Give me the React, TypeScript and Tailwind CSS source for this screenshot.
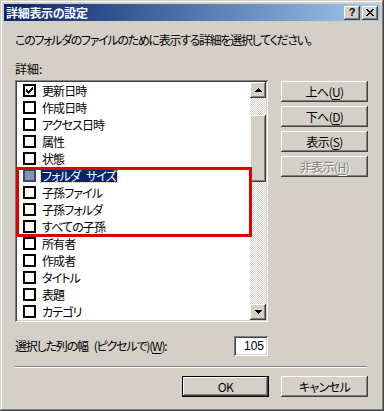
import React from "react";

const font =
  "font-['Noto_Sans_CJK_JP','Noto_Sans_CJK_SC',sans-serif] [font-feature-settings:'palt']";
const raised =
  "shadow-[inset_-1px_-1px_#404040,inset_1px_1px_#ffffff,inset_-2px_-2px_#808080,inset_2px_2px_#d4d0c8]";
const sunken =
  "shadow-[inset_1px_1px_#808080,inset_-1px_-1px_#ffffff,inset_2px_2px_#404040,inset_-2px_-2px_#d4d0c8]";

const items = [
  "更新日時",
  "作成日時",
  "アクセス日時",
  "属性",
  "状態",
  "フォルダ サイズ",
  "子孫ファイル",
  "子孫フォルダ",
  "すべての子孫",
  "所有者",
  "作成者",
  "タイトル",
  "表題",
  "カテゴリ",
];

function Check({ checked, selected }: { checked?: boolean; selected?: boolean }) {
  return (
    <div
      className={
        "w-[13px] h-[13px] shrink-0 border-2 " +
        (selected ? "border-[#3a4470] bg-[#8a92b4]" : "border-black bg-white")
      }
    >
      {checked && (
        <svg width="9" height="9" viewBox="0 0 9 9" shapeRendering="crispEdges">
          <rect x="7" y="1" width="1" height="1" fill="#000" />
          <rect x="6" y="2" width="2" height="1" fill="#000" />
          <rect x="1" y="3" width="1" height="1" fill="#000" />
          <rect x="5" y="3" width="3" height="1" fill="#000" />
          <rect x="1" y="4" width="2" height="1" fill="#000" />
          <rect x="4" y="4" width="3" height="1" fill="#000" />
          <rect x="1" y="5" width="5" height="1" fill="#000" />
          <rect x="2" y="6" width="3" height="1" fill="#000" />
          <rect x="3" y="7" width="1" height="1" fill="#000" />
        </svg>
      )}
    </div>
  );
}

function Btn({
  label,
  mn,
  disabled,
  def,
}: {
  label: string;
  mn?: string;
  disabled?: boolean;
  def?: boolean;
}) {
  const inner = (
    <div
      className={
        "flex items-center justify-center text-[12px] leading-none h-full w-full tracking-[-0.6px] " +
        raised +
        (disabled ? " text-[#808080] [text-shadow:1px_1px_#ffffff]" : " text-black")
      }
    >
      <span>
        {label}
        {mn && (
          <>
            (<span className="underline underline-offset-2">{mn}</span>)
          </>
        )}
      </span>
    </div>
  );
  if (def)
    return <div className="w-[87px] h-[21px] border border-black">{inner}</div>;
  return <div className="w-[87px] h-[21px]">{inner}</div>;
}

function ArrowBtn({ up }: { up?: boolean }) {
  return (
    <div className={"w-[16px] h-[16px] bg-[#d4d0c8] flex items-center justify-center " + raised}>
      <svg width="7" height="4" viewBox="0 0 7 4" shapeRendering="crispEdges">
        {up ? (
          <>
            <rect x="3" y="0" width="1" height="1" fill="#000" />
            <rect x="2" y="1" width="3" height="1" fill="#000" />
            <rect x="1" y="2" width="5" height="1" fill="#000" />
            <rect x="0" y="3" width="7" height="1" fill="#000" />
          </>
        ) : (
          <>
            <rect x="0" y="0" width="7" height="1" fill="#000" />
            <rect x="1" y="1" width="5" height="1" fill="#000" />
            <rect x="2" y="2" width="3" height="1" fill="#000" />
            <rect x="3" y="3" width="1" height="1" fill="#000" />
          </>
        )}
      </svg>
    </div>
  );
}

const checker =
  "bg-[repeating-conic-gradient(#d4d0c8_0_25%,#ffffff_0_50%)] bg-size-[2px_2px]";

function Label({ text }: { text: string }) {
  const parts = text.split(" ");
  return (
    <>
      {parts.map((p, i) => (
        <React.Fragment key={i}>
          {i > 0 && <span className="inline-block w-[6px]" />}
          {p}
        </React.Fragment>
      ))}
    </>
  );
}

export default function App() {
  return (
    <div
      className={
        "w-[384px] h-[411px] bg-[#d4d0c8] p-[4px] text-black text-[12px] " +
        font +
        " shadow-[inset_-1px_-1px_#404040,inset_1px_1px_#d4d0c8,inset_-2px_-2px_#808080,inset_2px_2px_#ffffff]"
      }
    >
      {/* Title bar */}
      <div className="h-[17px] flex items-center justify-between bg-gradient-to-r from-[#0a246a] to-[#a6caf0] pl-[2px] pr-[2px]">
        <span className="text-white font-bold text-[12px] leading-none tracking-[-0.3px]">
          詳細表示の設定
        </span>
        <div className="flex">
          <div
            className={
              "w-[16px] h-[14px] bg-[#d4d0c8] flex items-center justify-center text-[11px] font-bold leading-none font-['Liberation_Sans',sans-serif] " +
              raised
            }
          >
            ?
          </div>
          <div
            className={
              "ml-[2px] w-[16px] h-[14px] bg-[#d4d0c8] flex items-center justify-center " + raised
            }
          >
            <svg width="8" height="7" viewBox="0 0 8 7" shapeRendering="crispEdges">
              {[0, 1, 2, 3, 4, 5, 6].map((i) => (
                <React.Fragment key={i}>
                  <rect x={i} y={i} width="2" height="1" fill="#000" />
                  <rect x={6 - i} y={i} width="2" height="1" fill="#000" />
                </React.Fragment>
              ))}
            </svg>
          </div>
        </div>
      </div>

      {/* Content */}
      <div className="pl-[11px]">
        <div className="mt-[12px] leading-[14px] tracking-[-1.3px] whitespace-nowrap">
          このフォルダのファイルのために表示する詳細を選択してください。
        </div>
        <div className="mt-[15px] leading-[14px]">詳細:</div>

        <div className="mt-[4px] flex items-start gap-[13px]">
          {/* List box */}
          <div className={"relative w-[253px] h-[242px] bg-white p-[2px] flex " + sunken}>
            <div className="flex-1 flex flex-col">
              {items.map((it, i) => (
                <div key={it} className="h-[17px] flex items-center pl-[6px]">
                  <Check checked={i === 0} selected={i === 5} />
                  <span
                    className={
                      "ml-[5px] leading-[13px] px-[1px] whitespace-nowrap tracking-[-0.9px] " +
                      (i === 5
                        ? "bg-[#0a246a] text-white outline outline-1 outline-dotted outline-[#d8c890]"
                        : "")
                    }
                  >
                    <Label text={it} />
                  </span>
                </div>
              ))}
            </div>
            {/* Scrollbar */}
            <div className="w-[16px] flex flex-col">
              <ArrowBtn up />
              <div className={"h-[17px] " + checker} />
              <div className={"h-[67px] bg-[#d4d0c8] " + raised} />
              <div className={"flex-1 " + checker} />
              <ArrowBtn />
            </div>
            {/* Annotation */}
            <div className="absolute left-[1px] top-[87px] w-[236px] h-[70px] border-[3px] border-[#e00000] pointer-events-none" />
          </div>

          {/* Buttons */}
          <div className="pt-[1px] flex flex-col gap-[4px]">
            <Btn label="上へ" mn="U" />
            <Btn label="下へ" mn="D" />
            <Btn label="表示" mn="S" />
            <Btn label="非表示" mn="H" disabled />
          </div>
        </div>

        <div className="mt-[14px] w-[253px] flex items-center justify-between">
          <span className="leading-[14px] tracking-[-1.2px] whitespace-nowrap">
            選択した列の幅<span className="inline-block w-[6px]" />(ピクセルで)(
            <span className="underline underline-offset-2">W</span>):
          </span>
          <div
            className={
              "w-[34px] h-[20px] bg-white flex items-center justify-end pr-[4px] font-['Liberation_Sans',sans-serif] text-[12px] " +
              sunken
            }
          >
            105
          </div>
        </div>

        <div className="mt-[10px] w-[352px] h-[2px] border-t border-t-[#808080] border-b border-b-white" />

        <div className="mt-[8px] w-[353px] flex justify-end gap-[12px]">
          <Btn label="OK" def />
          <Btn label="キャンセル" />
        </div>
      </div>
    </div>
  );
}
